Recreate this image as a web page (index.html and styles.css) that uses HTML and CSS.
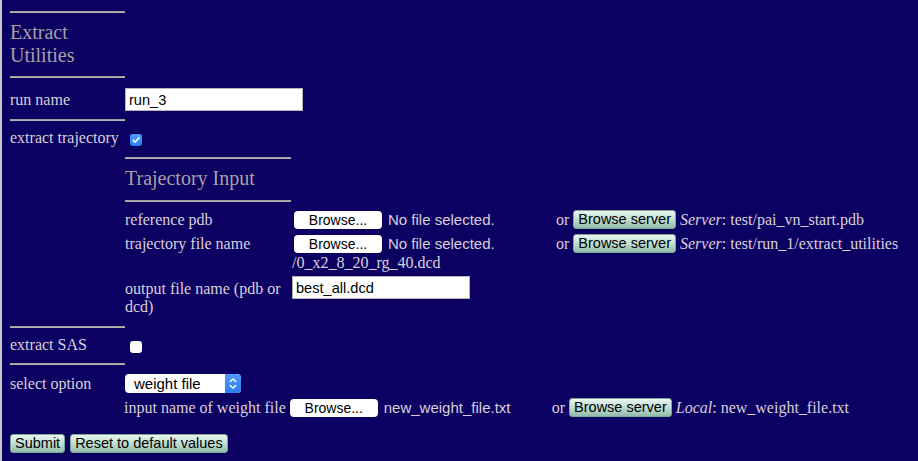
FILE: index.html
```html
<!DOCTYPE html>
<html>
<head>
<meta charset="utf-8">
<title>Extract Utilities</title>
<link rel="stylesheet" href="styles.css">
</head>
<body>
<div class="page">
  <form class="form">
    <div class="rule rule-first"></div>
    <h3 class="title">Extract Utilities</h3>
    <div class="rule rule-after-title"></div>

    <div class="row row-run">
      <label class="label">run name</label>
      <div class="cell"><input class="text-input" type="text" value="run_3"></div>
    </div>
    <div class="rule rule-std"></div>

    <div class="row row-check">
      <label class="label">extract trajectory</label>
      <div class="cell">
        <span class="checkbox checked">
          <svg width="12" height="12" viewBox="0 0 12 12"><path d="M3.2 6.3 L5.1 8.2 L8.9 3.9" fill="none" stroke="#fff" stroke-width="1.6" stroke-linecap="round" stroke-linejoin="round"/></svg>
        </span>
      </div>
    </div>

    <div class="sub">
      <div class="rule rule-sub rule-sub-first"></div>
      <h3 class="subtitle">Trajectory Input</h3>
      <div class="rule rule-sub rule-sub-after"></div>

      <div class="frow frow-1">
        <div class="flabel">reference pdb</div>
        <div class="fcell">
          <span class="file"><button type="button" class="browse">Browse...</button><span class="fname">No file selected.</span></span>
          or <button type="button" class="gbtn">Browse server</button> <em>Server</em>: test/pai_vn_start.pdb
        </div>
      </div>
      <div class="frow frow-2">
        <div class="flabel">trajectory file name</div>
        <div class="fcell">
          <span class="file"><button type="button" class="browse">Browse...</button><span class="fname">No file selected.</span></span>
          or <button type="button" class="gbtn">Browse server</button> <em>Server</em>: test/run_1/extract_utilities<wbr>/0_x2_8_20_rg_40.dcd
        </div>
      </div>
      <div class="frow frow-3">
        <div class="flabel flabel-wrap">output file name (pdb or dcd)</div>
        <div class="fcell-input"><input class="text-input" type="text" value="best_all.dcd"></div>
      </div>
    </div>

    <div class="rule rule-sas"></div>
    <div class="row row-sas">
      <label class="label">extract SAS</label>
      <div class="cell"><span class="checkbox"></span></div>
    </div>
    <div class="rule rule-sel"></div>

    <div class="row row-select">
      <label class="label">select option</label>
      <div class="cell">
        <div class="select">
          <span class="select-text">weight file</span>
          <span class="select-arrows">
            <svg width="16" height="19" viewBox="0 0 16 19"><path d="M5.2 7.6 L8 4.9 L10.8 7.6" fill="none" stroke="#fff" stroke-width="1.4" stroke-linecap="round" stroke-linejoin="round"/><path d="M5.2 11.4 L8 14.1 L10.8 11.4" fill="none" stroke="#fff" stroke-width="1.4" stroke-linecap="round" stroke-linejoin="round"/></svg>
          </span>
        </div>
        <div class="weight">
          input name of weight file <span class="file file-w"><button type="button" class="browse">Browse...</button><span class="fname">new_weight_file.txt</span></span>
          or <button type="button" class="gbtn">Browse server</button> <em>Local</em>: new_weight_file.txt
        </div>
      </div>
    </div>

    <div class="actions">
      <button type="button" class="gbtn">Submit</button>
      <button type="button" class="gbtn">Reset to default values</button>
    </div>
  </form>
</div>
</body>
</html>
```

FILE: styles.css
```css
html, body {
  margin: 0;
  padding: 0;
  background: #0c0062;
}
body {
  font-family: "Liberation Serif", "Times New Roman", serif;
  font-size: 16px;
  color: #d9d1d9;
}
.page {
  border-left: 2px solid #c9c9c9;
  padding-left: 8px;
  min-height: 461px;
  box-sizing: border-box;
}
.form {
  margin: 0;
  padding-top: 11px;
}
.rule {
  width: 115px;
  height: 1px;
  border-top: 1px solid #a39e9e;
  background: #b9b4b4;
}
.rule-after-title { margin-top: 9px; }
.rule-std { margin-top: 8px; }
.title, .subtitle {
  margin: 8px 0 0;
  font-size: 20px;
  line-height: 23px;
  font-weight: normal;
  color: #a9a1a1;
  width: 115px;
}
.subtitle { width: auto; }

.row {
  display: grid;
  grid-template-columns: 115px 1fr;
  align-items: center;
}
.label {
  line-height: 18px;
}
.row-run { margin-top: 10px; }
.row-check { margin-top: 8px; }
.row-check .checkbox { margin-top: 4px; }

.text-input {
  box-sizing: border-box;
  width: 178px;
  height: 23px;
  margin: 0;
  padding: 0 3px;
  border: 1px solid #b3b3b3;
  background: #fff;
  font-family: "Liberation Sans", Arial, sans-serif;
  font-size: 14.6px;
  color: #000;
  display: block;
}

.checkbox {
  display: block;
  width: 12px;
  height: 12px;
  margin-left: 5px;
  border-radius: 3px;
  background: #fff;
  box-sizing: border-box;
}
.checkbox svg { display: block; }
.checkbox.checked {
  background: linear-gradient(#4f9bff, #2a7ff0);
}

.sub {
  margin-left: 115px;
}
.rule-sub { width: 166px; }
.rule-sub-first { margin-top: 10px; }
.rule-sub-after { margin-top: 10px; }

.frow {
  display: grid;
  grid-template-columns: 167px 1fr;
  align-items: start;
}
.frow-1 { margin-top: 8px; }
.frow-2 { margin-top: 5px; }
.frow-3 { margin-top: 4px; }
.flabel { line-height: 19px; }
.flabel-wrap {
  line-height: 18px;
  margin-top: 4px;
}
.fcell {
  line-height: 19px;
}
.fcell .file, .fcell .gbtn,
.weight .file, .weight .gbtn {
  vertical-align: top;
}
.fcell-input .text-input { display: block; }

.file {
  display: inline-flex;
  align-items: center;
  width: 258px;
  height: 19px;
  margin-left: 2px;
  font-family: "Liberation Sans", Arial, sans-serif;
  font-size: 15px;
  line-height: 19px;
}
.file-w { margin-left: 0; }
.browse {
  box-sizing: border-box;
  width: 88px;
  height: 18px;
  margin: 0;
  padding: 0;
  border: none;
  border-radius: 4px;
  background: #fff;
  color: #000;
  font-family: "Liberation Sans", Arial, sans-serif;
  font-size: 14px;
  line-height: 18px;
}
.fname {
  margin-left: 6px;
  white-space: nowrap;
}

.gbtn {
  box-sizing: border-box;
  height: 19px;
  margin: 0;
  padding: 0 4px;
  border: 1px solid #7fa798;
  border-radius: 3px;
  background: linear-gradient(#e9f6f0 0%, #c3e0d4 45%, #93bdac 100%);
  color: #000;
  font-family: "Liberation Sans", Arial, sans-serif;
  font-size: 14.5px;
  line-height: 17px;
}

.rule-sas { margin-top: 10px; }
.row-sas { margin-top: 8px; }
.row-sas .checkbox { margin-top: 4px; }
.rule-sel { margin-top: 9px; }

.row-select {
  margin-top: 9px;
  align-items: start;
}
.row-select .label { line-height: 19px; }
.select {
  box-sizing: border-box;
  display: flex;
  align-items: center;
  width: 116px;
  height: 19px;
  border-radius: 4px;
  background: #fff;
  overflow: hidden;
}
.select-text {
  flex: 1;
  padding-left: 9px;
  font-family: "Liberation Sans", Arial, sans-serif;
  font-size: 15px;
  color: #000;
}
.select-arrows {
  width: 16px;
  height: 19px;
  background: linear-gradient(#4f9bff, #2a7ff0);
  border-radius: 0 4px 4px 0;
}
.select-arrows svg { display: block; }

.weight {
  margin-top: 5px;
  margin-left: -1px;
  line-height: 19px;
  white-space: nowrap;
}

.actions {
  margin-top: 17px;
  display: flex;
  gap: 5px;
}
```
